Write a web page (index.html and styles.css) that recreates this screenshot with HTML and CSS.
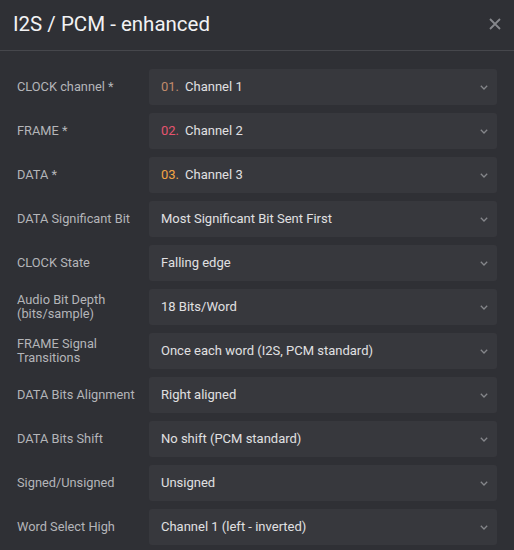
FILE: index.html
```html
<!DOCTYPE html>
<html>
<head>
<meta charset="utf-8">
<link rel="stylesheet" href="styles.css">
</head>
<body>
<div class="dialog">
  <div class="header">
    <div class="title">I2S / PCM - enhanced</div>
    <svg class="close" width="12" height="12" viewBox="0 0 12 12"><path d="M1 1L11 11M11 1L1 11" stroke="#86878c" stroke-width="1.8" fill="none"/></svg>
  </div>
  <div class="form">
    <div class="row"><div class="label">CLOCK channel *</div><div class="select"><span class="num n1">01.</span><span class="val">Channel 1</span><svg class="chev" width="8" height="5" viewBox="0 0 8 5"><path d="M0.8 0.8L4 4L7.2 0.8" stroke="#85868b" stroke-width="1.3" fill="none"/></svg></div></div>
    <div class="row"><div class="label">FRAME *</div><div class="select"><span class="num n2">02.</span><span class="val">Channel 2</span><svg class="chev" width="8" height="5" viewBox="0 0 8 5"><path d="M0.8 0.8L4 4L7.2 0.8" stroke="#85868b" stroke-width="1.3" fill="none"/></svg></div></div>
    <div class="row"><div class="label">DATA *</div><div class="select"><span class="num n3">03.</span><span class="val">Channel 3</span><svg class="chev" width="8" height="5" viewBox="0 0 8 5"><path d="M0.8 0.8L4 4L7.2 0.8" stroke="#85868b" stroke-width="1.3" fill="none"/></svg></div></div>
    <div class="row"><div class="label">DATA Significant Bit</div><div class="select"><span class="val">Most Significant Bit Sent First</span><svg class="chev" width="8" height="5" viewBox="0 0 8 5"><path d="M0.8 0.8L4 4L7.2 0.8" stroke="#85868b" stroke-width="1.3" fill="none"/></svg></div></div>
    <div class="row"><div class="label">CLOCK State</div><div class="select"><span class="val">Falling edge</span><svg class="chev" width="8" height="5" viewBox="0 0 8 5"><path d="M0.8 0.8L4 4L7.2 0.8" stroke="#85868b" stroke-width="1.3" fill="none"/></svg></div></div>
    <div class="row"><div class="label">Audio Bit Depth<br>(bits/sample)</div><div class="select"><span class="val">18 Bits/Word</span><svg class="chev" width="8" height="5" viewBox="0 0 8 5"><path d="M0.8 0.8L4 4L7.2 0.8" stroke="#85868b" stroke-width="1.3" fill="none"/></svg></div></div>
    <div class="row"><div class="label">FRAME Signal<br>Transitions</div><div class="select"><span class="val">Once each word (I2S, PCM standard)</span><svg class="chev" width="8" height="5" viewBox="0 0 8 5"><path d="M0.8 0.8L4 4L7.2 0.8" stroke="#85868b" stroke-width="1.3" fill="none"/></svg></div></div>
    <div class="row"><div class="label">DATA Bits Alignment</div><div class="select"><span class="val">Right aligned</span><svg class="chev" width="8" height="5" viewBox="0 0 8 5"><path d="M0.8 0.8L4 4L7.2 0.8" stroke="#85868b" stroke-width="1.3" fill="none"/></svg></div></div>
    <div class="row"><div class="label">DATA Bits Shift</div><div class="select"><span class="val">No shift (PCM standard)</span><svg class="chev" width="8" height="5" viewBox="0 0 8 5"><path d="M0.8 0.8L4 4L7.2 0.8" stroke="#85868b" stroke-width="1.3" fill="none"/></svg></div></div>
    <div class="row"><div class="label">Signed/Unsigned</div><div class="select"><span class="val">Unsigned</span><svg class="chev" width="8" height="5" viewBox="0 0 8 5"><path d="M0.8 0.8L4 4L7.2 0.8" stroke="#85868b" stroke-width="1.3" fill="none"/></svg></div></div>
    <div class="row"><div class="label">Word Select High</div><div class="select"><span class="val">Channel 1 (left - inverted)</span><svg class="chev" width="8" height="5" viewBox="0 0 8 5"><path d="M0.8 0.8L4 4L7.2 0.8" stroke="#85868b" stroke-width="1.3" fill="none"/></svg></div></div>
  </div>
</div>
</body>
</html>
```
FILE: styles.css
```css
html, body {
  margin: 0;
  padding: 0;
  background: #2f3035;
  font-family: Roboto, "Liberation Sans", sans-serif;
}
.dialog {
  width: 514px;
  height: 550px;
  overflow: hidden;
}
.header {
  height: 50px;
  border-bottom: 1px solid #46474c;
  display: flex;
  align-items: center;
  justify-content: space-between;
  padding: 0 13px 0 13px;
  box-sizing: content-box;
}
.title {
  color: #f2f2f4;
  font-size: 20.5px;
  font-weight: 400;
  padding-bottom: 2px;
}
.close {
  margin-bottom: 2px;
}
.form {
  padding: 18px 17px 0 17px;
  display: flex;
  flex-direction: column;
  gap: 8px;
}
.row {
  display: flex;
  align-items: center;
  height: 36px;
}
.label {
  width: 132px;
  flex: none;
  color: #b4b5b9;
  font-size: 12.8px;
  line-height: 14px;
}
.select {
  flex: 1;
  height: 36px;
  box-sizing: border-box;
  background: #37383d;
  border-radius: 3px;
  display: flex;
  align-items: center;
  padding: 0 9px 1px 12px;
  font-size: 13px;
  color: #e0e0e2;
}
.num {
  margin-right: 6px;
}
.n1 { color: #c08a6c; }
.n2 { color: #e6546f; }
.n3 { color: #f2a444; }
.val {
  flex: 1;
}
.chev {
  flex: none;
  margin-top: 1px;
}
```
